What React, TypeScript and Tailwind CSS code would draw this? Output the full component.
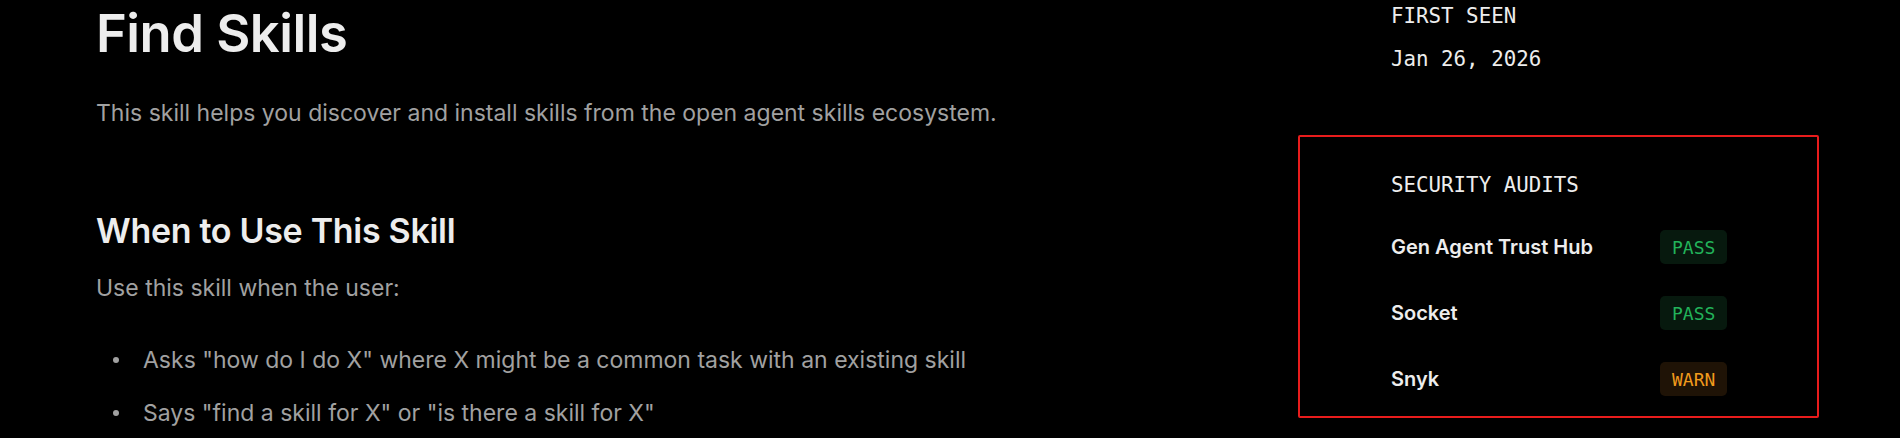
import React from 'react'

const audits = [
  { name: 'Gen Agent Trust Hub', status: 'PASS' },
  { name: 'Socket', status: 'PASS' },
  { name: 'Snyk', status: 'WARN' },
]

const bullets = [
  'Asks "how do I do X" where X might be a common task with an existing skill',
  'Says "find a skill for X" or "is there a skill for X"',
]

function StatusBadge({ status }: { status: string }) {
  const pass = status === 'PASS'
  return (
    <span
      className={
        pass
          ? 'inline-flex h-[34px] items-center rounded-[5px] bg-[#07190e] px-[12px] font-["DejaVu_Sans_Mono",monospace] text-[18px] text-[#22b35a]'
          : 'inline-flex h-[34px] items-center rounded-[5px] bg-[#1f1306] px-[12px] font-["DejaVu_Sans_Mono",monospace] text-[18px] text-[#f19a1c]'
      }
    >
      {status}
    </span>
  )
}

export default function App() {
  return (
    <div className="flex h-[438px] w-full overflow-hidden bg-black font-['Inter',sans-serif]">
      {/* Main content */}
      <main className="flex-1 pl-[96px] pt-[3px]">
        <h1 className="text-[52.5px] font-semibold leading-[60px] tracking-[-0.5px] text-[#ededed]">
          Find Skills
        </h1>
        <p className="mt-[34px] text-[23px] leading-[32px] text-[#a1a1a1]">
          This skill helps you discover and install skills from the open agent skills ecosystem.
        </p>

        <h2 className="mt-[82px] text-[34px] font-semibold leading-[40px] tracking-[-0.3px] text-[#ededed]">
          When to Use This Skill
        </h2>
        <p className="mt-[21px] text-[23px] leading-[32px] text-[#a1a1a1]">
          Use this skill when the user:
        </p>
        <ul className="mt-[40px] space-y-[21px]">
          {bullets.map((b) => (
            <li key={b} className="flex items-center text-[23px] leading-[32px] text-[#a1a1a1]">
              <span className="ml-[17px] mr-[24px] h-[6px] w-[6px] shrink-0 rounded-full bg-[#a1a1a1]" />
              {b}
            </li>
          ))}
        </ul>
      </main>

      {/* Sidebar */}
      <aside className="mr-[81px] w-[521px] shrink-0 pt-[4px]">
        <div className="pl-[93px] font-['DejaVu_Sans_Mono',monospace] text-[20.8px] leading-[24px] text-[#ededed]">
          <div>FIRST SEEN</div>
          <div className="mt-[19px]">Jan 26, 2026</div>
        </div>

        <section className="mt-[64px] rounded-[2px] border-2 border-[#e81c1c] pb-[20px] pl-[91px] pt-[36px]">
          <div className="font-['DejaVu_Sans_Mono',monospace] text-[20.8px] leading-[24px] text-[#ededed]">
            SECURITY AUDITS
          </div>
          <div className="mt-[33px] space-y-[32px]">
            {audits.map((a) => (
              <div key={a.name} className="flex h-[34px] items-center">
                <span className="w-[269px] text-[20px] font-semibold text-[#ededed]">{a.name}</span>
                <StatusBadge status={a.status} />
              </div>
            ))}
          </div>
        </section>
      </aside>
    </div>
  )
}
